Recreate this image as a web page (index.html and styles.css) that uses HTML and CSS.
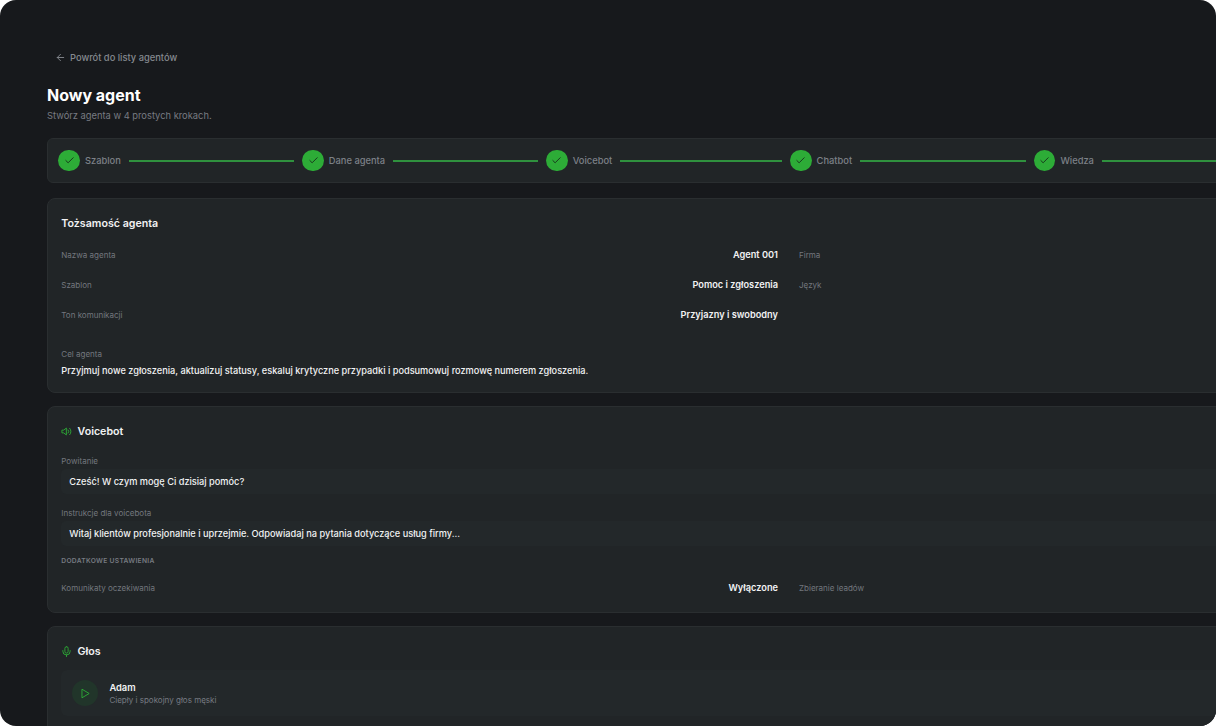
FILE: index.html
```html
<!DOCTYPE html>
<html lang="pl">
<head>
    <meta charset="UTF-8">
    <meta name="viewport" content="width=device-width, initial-scale=1.0">
    <title>Nowy agent</title>
    <link rel="stylesheet" href="styles.css">
</head>
<body>

    <div class="app">
        <div class="content">
            <a class="back">
                <svg class="icon-back" viewBox="0 0 24 24"><path d="M12 19l-7-7 7-7M19 12H5"/></svg>
                <span>Powrót do listy agentów</span>
            </a>

            <h1>Nowy agent</h1>
            <p class="subtitle">Stwórz agenta w 4 prostych krokach.</p>

            <!-- Stepper -->
            <div class="stepper">
                <div class="step">
                    <span class="dot"><svg viewBox="0 0 24 24"><path d="M20 6L9 17l-5-5"/></svg></span>
                    <span class="step-label">Szablon</span>
                    <span class="line"></span>
                </div>
                <div class="step">
                    <span class="dot"><svg viewBox="0 0 24 24"><path d="M20 6L9 17l-5-5"/></svg></span>
                    <span class="step-label">Dane agenta</span>
                    <span class="line"></span>
                </div>
                <div class="step">
                    <span class="dot"><svg viewBox="0 0 24 24"><path d="M20 6L9 17l-5-5"/></svg></span>
                    <span class="step-label">Voicebot</span>
                    <span class="line"></span>
                </div>
                <div class="step">
                    <span class="dot"><svg viewBox="0 0 24 24"><path d="M20 6L9 17l-5-5"/></svg></span>
                    <span class="step-label">Chatbot</span>
                    <span class="line"></span>
                </div>
                <div class="step">
                    <span class="dot"><svg viewBox="0 0 24 24"><path d="M20 6L9 17l-5-5"/></svg></span>
                    <span class="step-label">Wiedza</span>
                    <span class="line"></span>
                </div>
            </div>

            <!-- Identity -->
            <div class="card identity">
                <h2>Tożsamość agenta</h2>
                <div class="grid">
                    <div class="row"><span class="label">Nazwa agenta</span><span class="value">Agent 001</span></div>
                    <div class="row"><span class="label">Firma</span></div>
                    <div class="row"><span class="label">Szablon</span><span class="value">Pomoc i zgłoszenia</span></div>
                    <div class="row"><span class="label">Język</span></div>
                    <div class="row"><span class="label">Ton komunikacji</span><span class="value">Przyjazny i swobodny</span></div>
                </div>
                <div class="goal">
                    <p class="label">Cel agenta</p>
                    <p class="text">Przyjmuj nowe zgłoszenia, aktualizuj statusy, eskaluj krytyczne przypadki i podsumowuj rozmowę numerem zgłoszenia.</p>
                </div>
            </div>

            <!-- Voicebot -->
            <div class="card voicebot">
                <h2>
                    <svg class="icon" viewBox="0 0 24 24"><path d="M11 5L6 9H2v6h4l5 4zM15.5 8.5a5 5 0 0 1 0 7M19 5a10 10 0 0 1 0 14"/></svg>
                    Voicebot
                </h2>
                <p class="label">Powitanie</p>
                <p class="box">Cześć! W czym mogę Ci dzisiaj pomóc?</p>
                <p class="label">Instrukcje dla voicebota</p>
                <p class="box">Witaj klientów profesjonalnie i uprzejmie. Odpowiadaj na pytania dotyczące usług firmy...</p>
                <h3>Dodatkowe ustawienia</h3>
                <div class="grid">
                    <div class="row"><span class="label">Komunikaty oczekiwania</span><span class="value">Wyłączone</span></div>
                    <div class="row"><span class="label">Zbieranie leadów</span></div>
                </div>
            </div>

            <!-- Voice -->
            <div class="card voice">
                <h2>
                    <svg class="icon" viewBox="0 0 24 24"><rect x="8.5" y="1.5" width="7" height="14" rx="3.5"/><path d="M20 10v1.5a8 8 0 0 1-16 0V10M12 19.5V23"/></svg>
                    Głos
                </h2>
                <div class="voice-item">
                    <span class="play"><svg viewBox="0 0 24 24"><path d="M5 3l15 9-15 9z"/></svg></span>
                    <div>
                        <p class="voice-name">Adam</p>
                        <p class="voice-desc">Ciepły i spokojny głos męski</p>
                    </div>
                </div>
            </div>
        </div>
    </div>

</body>
</html>
```

FILE: styles.css
```css
* {
    box-sizing: border-box;
}
body {
    margin: 0;
    background: #fff;
    font-family: Inter, sans-serif;
    color: #f1f2f3;
    overflow: hidden;
}
h1, h2, h3, p {
    margin: 0;
}
svg {
    fill: none;
    stroke: currentColor;
    stroke-width: 2;
    stroke-linecap: round;
    stroke-linejoin: round;
    flex: none;
}
.app {
    height: 726px;
    overflow: hidden;
    background: #17191c;
    border-radius: 16px;
    padding: 47px 0 0 47px;
}
.content {
    width: 1483px;
}
.back {
    display: flex;
    align-items: center;
    gap: 4px;
    height: 20px;
    padding-left: 8px;
    font-size: 9.33px;
    font-weight: 500;
    color: #85898f;
}
.icon-back {
    width: 11px;
    height: 11px;
}
h1 {
    margin-top: 16px;
    font-size: 16px;
    line-height: 24px;
    font-weight: 700;
    color: #fff;
}
.subtitle {
    margin-top: 1px;
    font-size: 9.33px;
    line-height: 16px;
    color: #777b82;
}

/* Stepper */
.stepper {
    display: flex;
    height: 45px;
    margin: 14px 0 15px;
    padding-left: 10.4px;
    border: 1px solid #2a2e30;
    border-radius: 6px;
    background: #212527;
}
.step {
    display: flex;
    align-items: center;
    flex: none;
    width: 243.9px;
    padding-right: 8px;
}
.dot {
    display: flex;
    align-items: center;
    justify-content: center;
    width: 21.5px;
    height: 21.5px;
    border-radius: 50%;
    background: #2dac37;
    color: #17301b;
}
.dot svg {
    width: 11px;
    height: 11px;
}
.step-label {
    margin: 0 8px 0 5px;
    font-size: 9.33px;
    font-weight: 500;
    color: #7d8187;
}
.line {
    flex: 1;
    height: 2px;
    background: #2f913e;
}

/* Cards */
.card {
    margin-bottom: 13px;
    padding: 13px 13.3px;
    border: 1px solid #2a2e30;
    border-radius: 8px;
    background: #212527;
}
.identity {
    height: 195px;
}
.voicebot {
    height: 207px;
}
.voice {
    height: 150px;
}
h2 {
    display: flex;
    align-items: center;
    gap: 5.5px;
    height: 22px;
    font-size: 10.67px;
    font-weight: 600;
}
.icon {
    width: 11px;
    height: 11px;
    margin-left: -0.3px;
    color: #2dac37;
}
.grid {
    display: grid;
    grid-template-columns: 1fr 1fr;
    column-gap: 21px;
}
.row {
    display: flex;
    align-items: center;
    justify-content: space-between;
    height: 30px;
}
.identity .grid {
    margin-top: 6px;
}
.label {
    font-size: 8.03px;
    line-height: 14px;
    color: #73777e;
}
.value {
    font-size: 9.22px;
    line-height: 14px;
    font-weight: 600;
}
.goal {
    margin-top: 17px;
}
.text {
    margin-top: 2px;
    font-size: 9.21px;
    line-height: 16px;
    font-weight: 500;
}
.voicebot h2 {
    margin-bottom: 12px;
}
.box {
    height: 25px;
    margin: 1px 0 12px;
    padding: 0 8px;
    border-radius: 5px;
    background: #23282a;
    font-size: 9.21px;
    line-height: 25px;
    font-weight: 500;
}
h3 {
    margin-top: -3px;
    font-size: 6.7px;
    line-height: 12px;
    font-weight: 600;
    letter-spacing: 0.3px;
    text-transform: uppercase;
    color: #777b82;
}
.voicebot .grid {
    margin-top: 6px;
}

/* Voice */
.voice-item {
    display: flex;
    align-items: center;
    gap: 11px;
    height: 46px;
    margin-top: 8px;
    padding-left: 10.6px;
    border-radius: 6px;
    background: #23282a;
}
.play {
    display: flex;
    align-items: center;
    justify-content: center;
    width: 26.5px;
    height: 26.5px;
    border-radius: 50%;
    background: #21352a;
    color: #2dac37;
}
.play svg {
    width: 11px;
    height: 11px;
}
.voice-name {
    padding-top: 1px;
    font-size: 9.33px;
    line-height: 12px;
    font-weight: 600;
}
.voice-desc {
    font-size: 8.03px;
    line-height: 12px;
    color: #777b82;
}
```
